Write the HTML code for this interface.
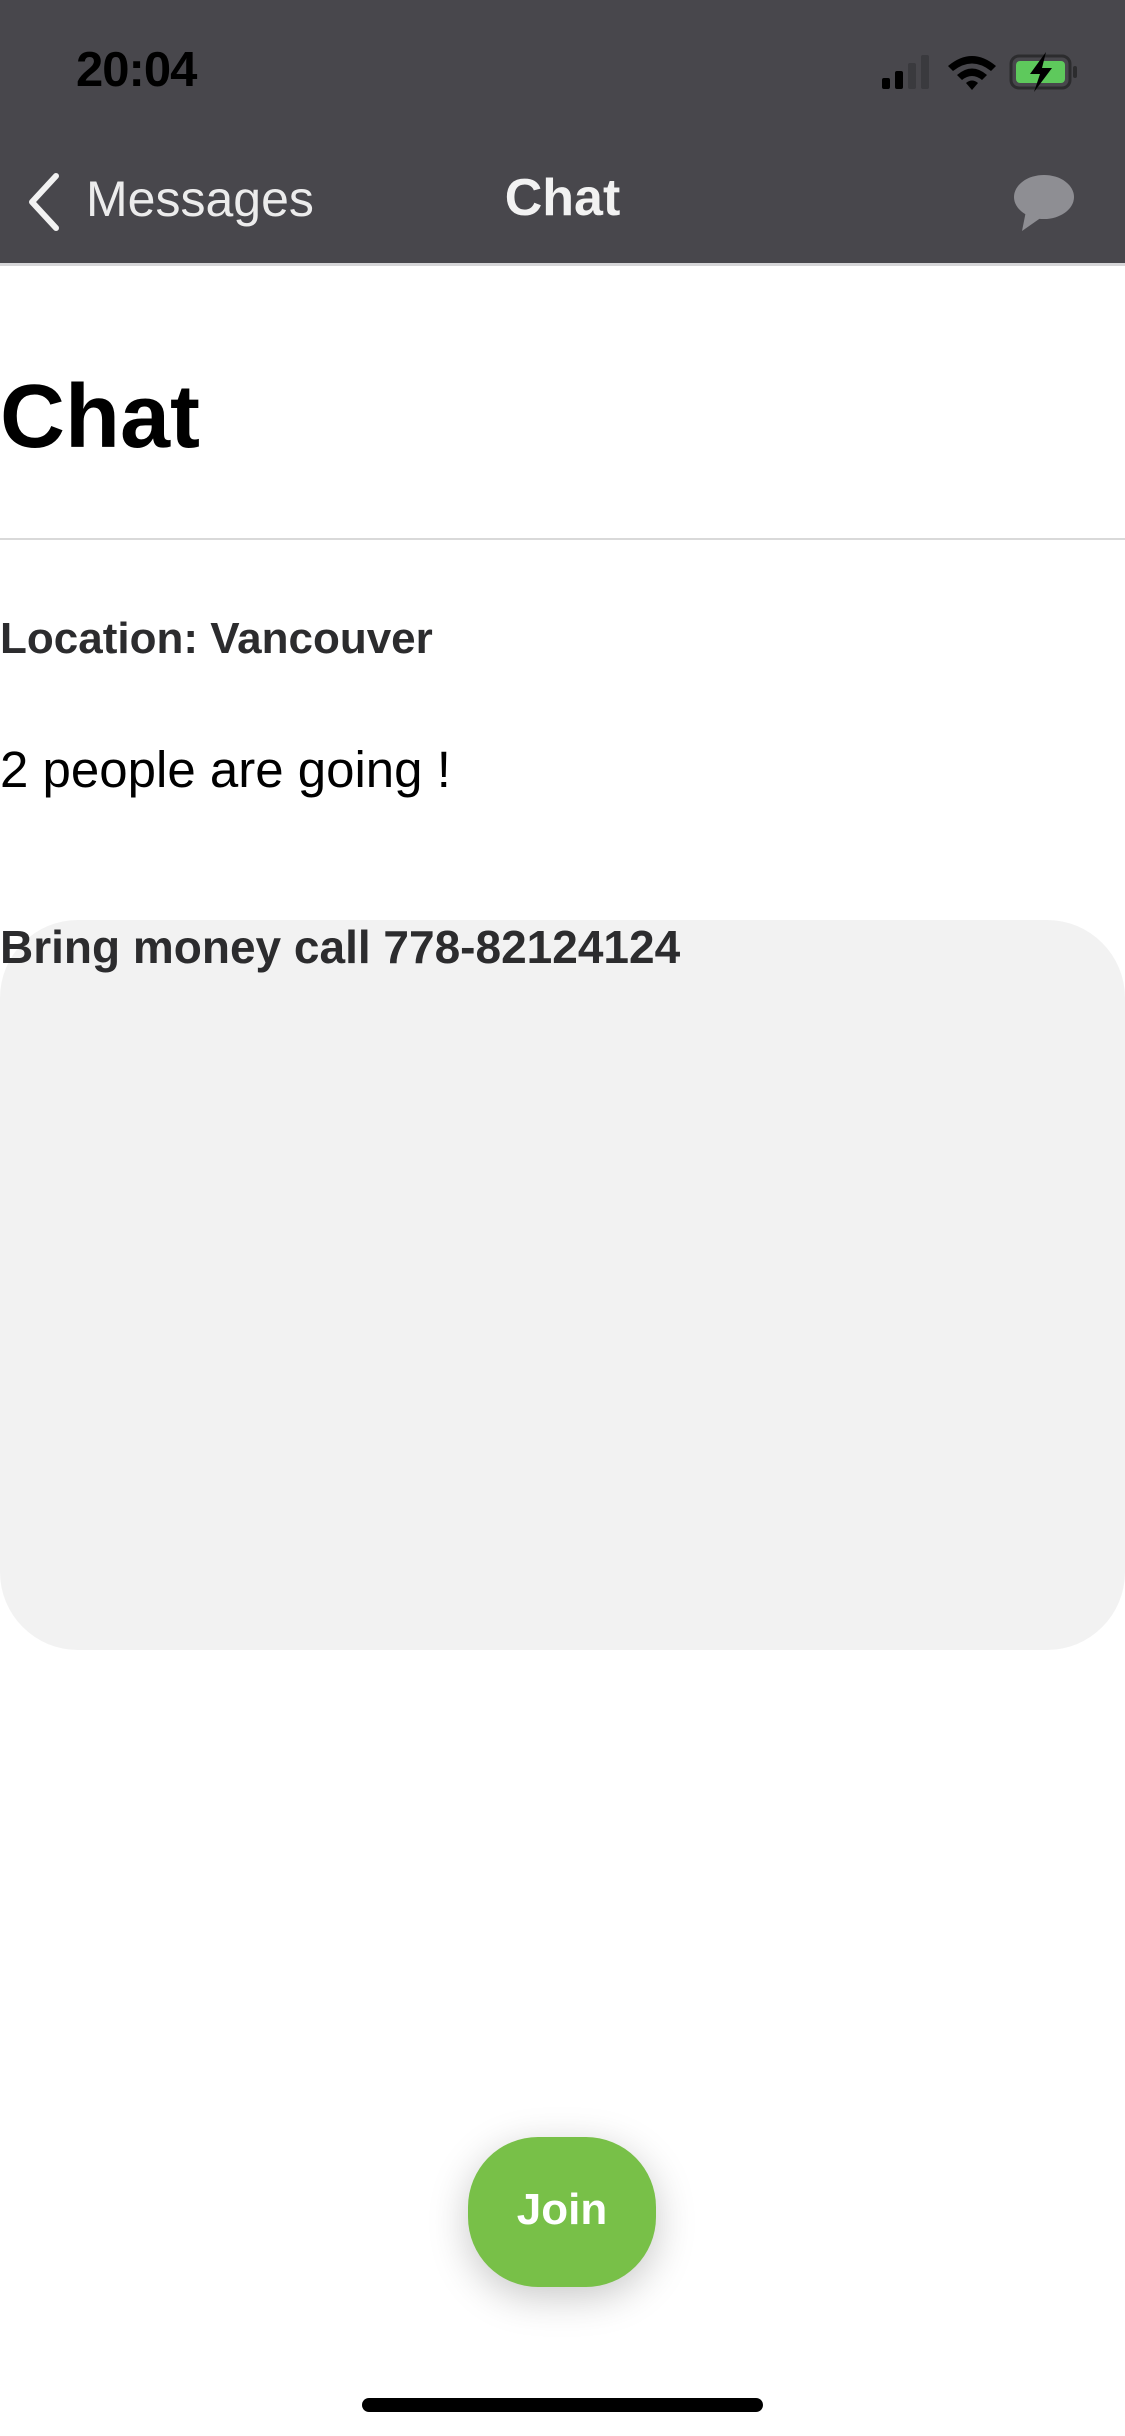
<!DOCTYPE html>
<html><head><meta charset="utf-8"><style>
*{margin:0;padding:0;box-sizing:border-box}
html,body{width:1125px;height:2436px;background:#fff;overflow:hidden;font-family:"Liberation Sans",sans-serif;position:relative}
.hdr{position:absolute;left:0;top:0;width:1125px;height:266px;background:#48474c;border-bottom:3px solid #d6d6d8}
.abs{position:absolute;white-space:nowrap}
</style></head><body>
<div class="hdr"></div>
<div class="abs" style="left:76px;top:42px;font-size:49px;font-weight:bold;color:#000;letter-spacing:-1px">20:04</div>
<svg class="abs" style="left:880px;top:52px" width="205" height="40" viewBox="0 0 205 40">
 <rect x="2" y="26" width="8" height="11" rx="2" fill="#000"/>
 <rect x="15" y="19" width="8" height="18" rx="2" fill="#000"/>
 <rect x="28" y="11" width="8" height="26" rx="2" fill="#3a3a3e"/>
 <rect x="41" y="3" width="8" height="34" rx="2" fill="#3a3a3e"/>
 <path d="M68 14 Q92 -6 116 14 L111 19 Q92 4 73 19Z" fill="#000"/>
 <path d="M77 23 Q92 10 107 23 L102 28 Q92 20 82 28Z" fill="#000"/>
 <path d="M86 31 Q92 26 98 31 L92 38Z" fill="#000"/>
 <rect x="131" y="4" width="59" height="32" rx="8" fill="none" stroke="#2c2c2e" stroke-width="3"/>
 <rect x="136" y="9" width="49" height="22" rx="4" fill="#5ec95c"/>
 <rect x="193" y="14" width="4" height="12" rx="2" fill="#2c2c2e"/>
 <path d="M166 0 L150 22 L160 22 L154 40 L172 16 L162 16 Z" fill="#000"/>
</svg>
<svg class="abs" style="left:26px;top:172px" width="36" height="60" viewBox="0 0 36 60"><path d="M30 4 L6 30 L30 56" fill="none" stroke="#f2f2f2" stroke-width="6" stroke-linecap="round" stroke-linejoin="round"/></svg>
<div class="abs" style="left:86px;top:170px;font-size:50px;color:#ececec">Messages</div>
<div class="abs" style="left:0;width:1125px;text-align:center;top:168px;font-size:52px;font-weight:bold;color:#f2f2f2">Chat</div>
<svg class="abs" style="left:1012px;top:173px" width="66" height="60" viewBox="0 0 66 60"><ellipse cx="32" cy="24" rx="30" ry="22" fill="#8e8e93"/><path d="M14 38 L10 58 L30 44Z" fill="#8e8e93"/></svg>
<div class="abs" style="left:0;top:366px;font-size:90px;font-weight:bold;color:#000">Chat</div>
<div class="abs" style="left:0;top:538px;width:1125px;height:2px;background:#d9d9d9"></div>
<div class="abs" style="left:0;top:920px;width:1125px;height:730px;background:#f2f2f2;border-radius:78px"></div>
<div class="abs" style="left:0;top:614px;font-size:44px;font-weight:bold;color:#2c2c2e">Location: Vancouver</div>
<div class="abs" style="left:0;top:740px;font-size:51px;color:#000">2 people are going !</div>
<div class="abs" style="left:0;top:920px;font-size:46px;font-weight:bold;color:#2c2c2e">Bring money call 778-82124124</div>
<div class="abs" style="left:468px;top:2137px;width:188px;height:150px;border-radius:70px;background:#78c048;box-shadow:0 10px 40px rgba(0,0,0,0.22);color:#fff;font-size:44px;font-weight:bold;text-align:center;line-height:146px">Join</div>
<div class="abs" style="left:362px;top:2398px;width:401px;height:14px;border-radius:7px;background:#000"></div>
</body></html>
